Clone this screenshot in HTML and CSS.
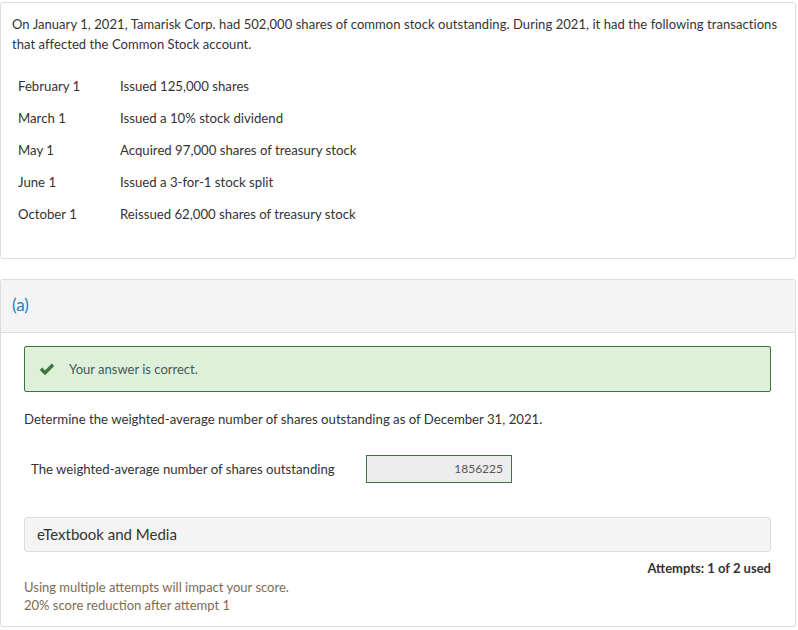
FILE: index.html
```html
<!DOCTYPE html>
<html lang="en">
<head>
  <meta charset="UTF-8" />
  <title>Question</title>
  <link rel="stylesheet" href="styles.css">
</head>
<body>
  <div class="card intro">
    <p class="lead">On January 1, 2021, Tamarisk Corp. had 502,000 shares of common stock outstanding. During 2021, it had the following transactions that affected the Common Stock account.</p>
    <table class="events">
      <tr><td class="date">February 1</td><td>Issued 125,000 shares</td></tr>
      <tr><td class="date">March 1</td><td>Issued a 10% stock dividend</td></tr>
      <tr><td class="date">May 1</td><td>Acquired 97,000 shares of treasury stock</td></tr>
      <tr><td class="date">June 1</td><td>Issued a 3-for-1 stock split</td></tr>
      <tr><td class="date">October 1</td><td>Reissued 62,000 shares of treasury stock</td></tr>
    </table>
  </div>

  <div class="card part">
    <div class="part-head">(a)</div>
    <div class="part-body">
      <div class="correct">
        <svg class="check" width="16" height="13" viewBox="0 0 16 13">
          <path d="M0.8 7 L3.2 4.6 L6 7.4 L12.8 0.6 L15.2 3 L6 12.2 Z" fill="#3c763d"/>
        </svg>
        <span>Your answer is correct.</span>
      </div>

      <p class="prompt">Determine the weighted-average number of shares outstanding as of December 31, 2021.</p>

      <div class="answer-row">
        <label for="answer">The weighted-average number of shares outstanding</label>
        <div class="answer-box">1856225</div>
      </div>

      <div class="media">eTextbook and Media</div>

      <div class="attempts">Attempts: 1 of 2 used</div>
      <div class="notice">
        Using multiple attempts will impact your score.<br>
        20% score reduction after attempt 1
      </div>
    </div>
  </div>
</body>
</html>
```

FILE: styles.css
```css
body {
  margin: 0;
  font-family: Lato, "Open Sans", sans-serif;
  color: #333;
  background: white;
}

.card {
  width: 796px;
  box-sizing: border-box;
  border: 1px solid #ddd;
  border-radius: 3px;
  background: white;
}

.intro {
  margin-top: 2px;
  padding: 11px 0 28px 0;
  height: 257px;
}

.lead {
  margin: 0;
  padding: 0 10px 0 11px;
  font-size: 13px;
  line-height: 20px;
  letter-spacing: 0.06px;
}

.events {
  margin: 16px 0 0 10px;
  border-collapse: collapse;
  font-size: 13.2px;
}

.events td {
  height: 32px;
  padding: 0;
  vertical-align: middle;
}

.events .date {
  width: 102px;
  padding-left: 7px;
}

.part {
  margin-top: 20px;
  height: 348px;
}

.part-head {
  background: #f4f4f4;
  border-bottom: 1px solid #ddd;
  height: 52px;
  line-height: 50px;
  padding-left: 11px;
  font-size: 17px;
  color: #1f7fc0;
}

.part-body {
  padding: 13px 24px 0 23px;
}

.correct {
  display: flex;
  align-items: center;
  height: 44px;
  background: #dff0d8;
  border: 1px solid #3c763d;
  border-radius: 2px;
  font-size: 13px;
  color: #3f5a5c;
}

.check {
  margin: 0 14px 0 14px;
}

.prompt {
  margin: 19px 0 0 0;
  font-size: 13.2px;
  line-height: 16px;
}

.answer-row {
  display: flex;
  align-items: center;
  margin-top: 28px;
  padding-left: 7px;
}

.answer-row label {
  width: 335px;
  font-size: 13.2px;
}

.answer-box {
  width: 146px;
  height: 28px;
  box-sizing: border-box;
  border: 1px solid #3c763d;
  background: #ececec;
  text-align: right;
  padding: 0 8px;
  line-height: 26px;
  font-size: 12px;
  color: #555;
}

.media {
  margin-top: 34px;
  height: 35px;
  box-sizing: border-box;
  background: #f4f4f4;
  border: 1px solid #ddd;
  border-radius: 3px;
  padding-left: 12px;
  line-height: 33px;
  font-size: 15px;
}

.attempts {
  margin-top: 8px;
  text-align: right;
  font-size: 13px;
  font-weight: bold;
}

.notice {
  margin-top: 2px;
  font-size: 13px;
  line-height: 18px;
  color: #7d6b52;
}
```
